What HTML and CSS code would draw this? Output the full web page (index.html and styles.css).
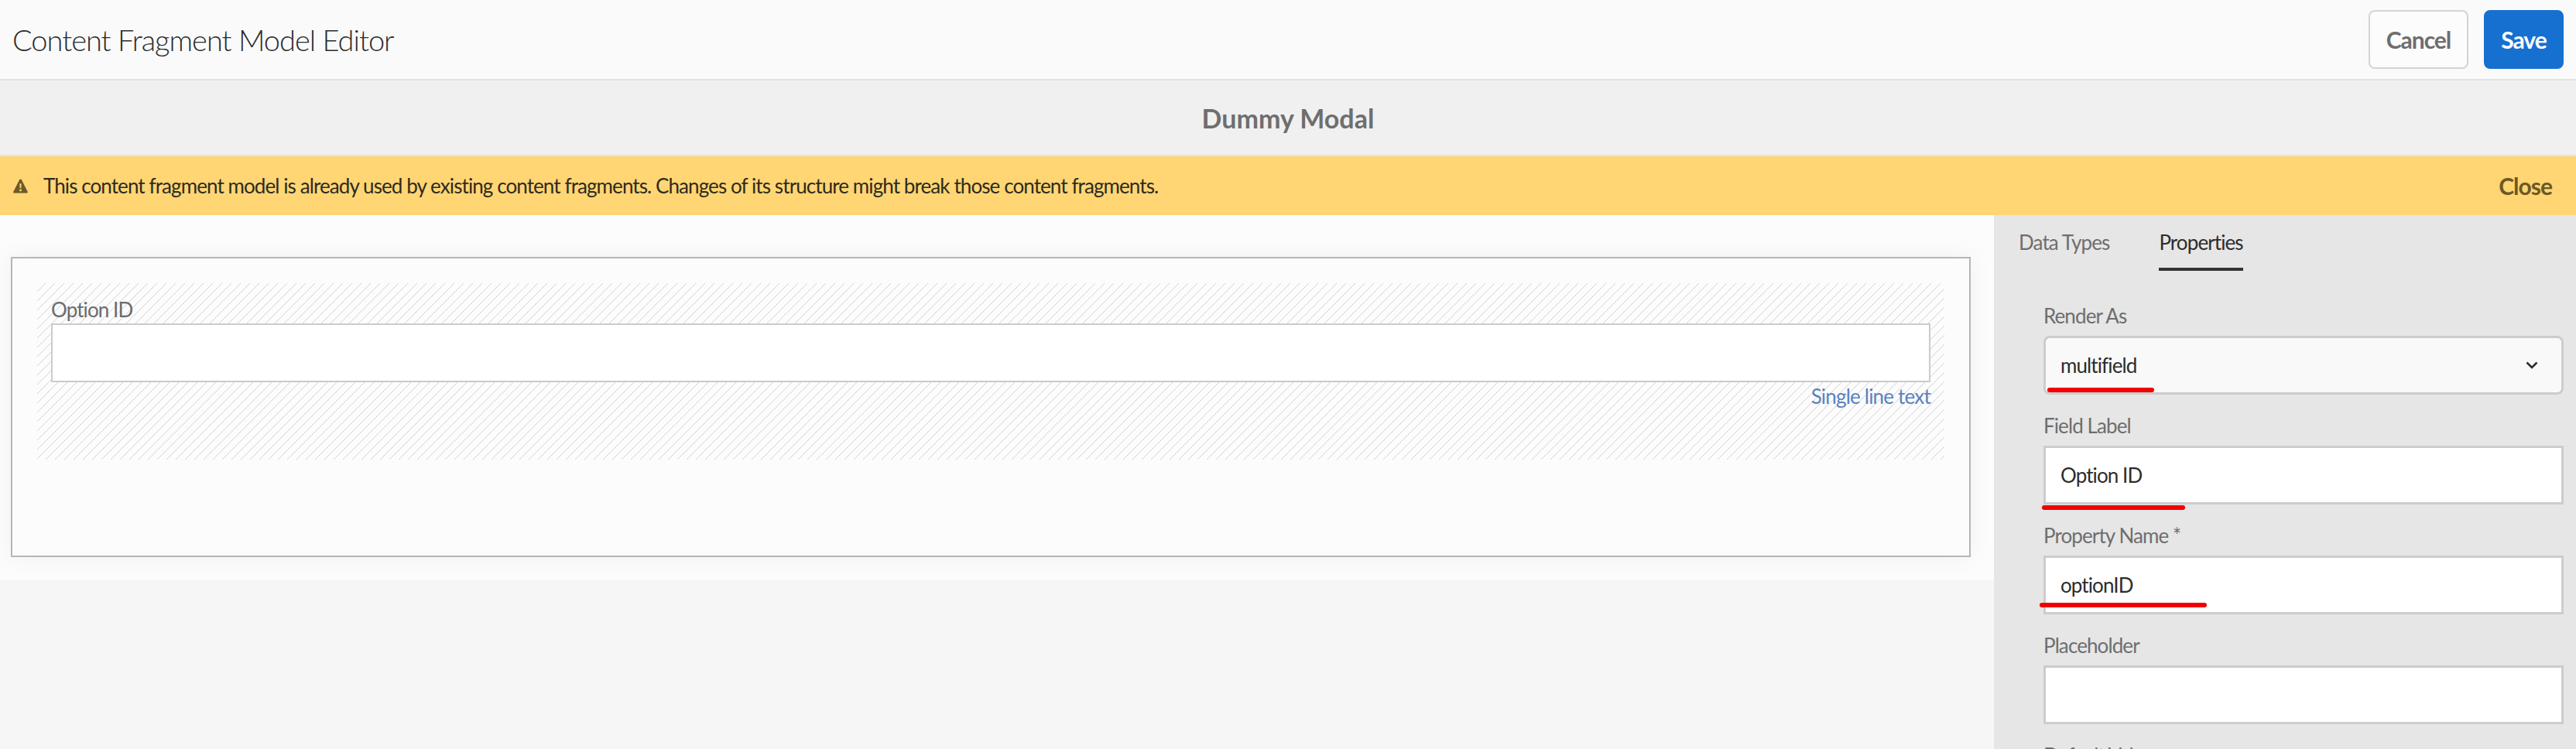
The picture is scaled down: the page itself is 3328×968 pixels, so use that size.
FILE: index.html
```html
<!DOCTYPE html>
<html lang="en">
<head>
<meta charset="utf-8">
<title>Content Fragment Model Editor</title>
<link rel="stylesheet" href="styles.css">
</head>
<body>
<header class="topbar">
  <h1 class="topbar-title">Content Fragment Model Editor</h1>
  <div class="actions">
    <button class="btn btn-cancel">Cancel</button>
    <button class="btn btn-save">Save</button>
  </div>
</header>
<div class="modelbar">Dummy Modal</div>
<div class="alert">
  <svg class="alert-icon" viewBox="0 0 20 20" aria-hidden="true"><path fill-rule="evenodd" d="M10 0.5c.6 0 1.1.3 1.4.9l8.3 16.2c.5 1-.2 2-1.3 2H1.600c-1.100 0-1.800-1-1.300-2L8.600 1.400C8.900.8 9.400.5 10 .5zM8.800 6.500l.3 6.500h1.800l.3-6.500zM10 14.300a1.500 1.500 0 1 0 0 3 1.500 1.500 0 0 0 0-3z"/></svg>
  <span class="alert-text">This content fragment model is already used by existing content fragments. Changes of its structure might break those content fragments.</span>
  <span class="alert-close">Close</span>
</div>
<main class="workspace">
  <section class="stage">
    <div class="canvas">
      <div class="card">
        <div class="dropzone">
          <div class="preview-label">Option ID</div>
          <div class="preview-input"></div>
          <div class="preview-type">Single line text</div>
        </div>
      </div>
    </div>
  </section>
  <aside class="panel">
    <nav class="tabs">
      <span class="tab">Data Types</span>
      <span class="tab tab-active">Properties</span>
    </nav>
    <div class="form">
      <div class="field">
        <label class="field-label">Render As</label>
        <div class="control control-select">
          <span>multifield</span>
          <svg class="chevron" viewBox="0 0 16 10" aria-hidden="true"><path d="M1.500 1.500L8 8l6.500-6.500" fill="none" stroke="#2c2c2c" stroke-width="2.600"/></svg>
          <i class="mark mark-select"></i>
        </div>
      </div>
      <div class="field">
        <label class="field-label">Field Label</label>
        <div class="control">Option ID<i class="mark mark-label"></i></div>
      </div>
      <div class="field">
        <label class="field-label">Property Name *</label>
        <div class="control">optionID<i class="mark mark-name"></i></div>
      </div>
      <div class="field">
        <label class="field-label">Placeholder</label>
        <div class="control"></div>
      </div>
      <div class="field">
        <label class="field-label">Default Value</label>
      </div>
    </div>
  </aside>
</main>
</body>
</html>
```
FILE: styles.css
```css
* { box-sizing: border-box; }
html, body { margin: 0; padding: 0; }
body {
  width: 3328px;
  height: 968px;
  overflow: hidden;
  background: #f6f6f6;
  font-family: Lato, "Open Sans", sans-serif;
  color: #2c2c2c;
}
.topbar {
  height: 104px;
  background: #fafafa;
  border-bottom: 2px solid #e1e1e1;
  display: flex;
  align-items: center;
  justify-content: space-between;
  padding: 0 16px 0 16px;
}
.topbar-title {
  margin: 0;
  font-size: 38px;
  font-weight: 300;
  letter-spacing: -1px;
  color: #2c2c2c;
}
.actions { display: flex; gap: 20px; }
.btn {
  height: 76px;
  border-radius: 8px;
  font-family: inherit;
  font-size: 30px;
  font-weight: 700;
  letter-spacing: -1px;
  padding: 0;
}
.btn-cancel {
  width: 129px;
  background: #fcfcfc;
  border: 2px solid #d4d4d4;
  color: #6e6e6e;
}
.btn-save {
  width: 103px;
  background: #1570d0;
  border: 2px solid #1570d0;
  color: #fff;
}
.modelbar {
  height: 98px;
  background: #f0f0f0;
  border-bottom: 2px solid #e5e5e5;
  display: flex;
  align-items: center;
  justify-content: center;
  font-size: 34px;
  font-weight: 700;
  color: #6e6e6e;
}
.alert {
  height: 76px;
  background: #ffd673;
  display: flex;
  align-items: center;
  padding: 0 31px 0 17px;
  font-size: 26px;
}
.alert-icon { width: 19px; height: 19px; fill: #6d5a2a; flex: none; }
.alert-text { margin-left: 20px; flex: 1; color: #2e2a1e; letter-spacing: -0.91px; }
.alert-close { font-size: 30px; font-weight: 700; letter-spacing: -1px; color: #6d5826; }
.workspace { display: flex; height: 690px; }
.stage { width: 2576px; flex: none; }
.canvas {
  height: 472px;
  background: #fcfcfc;
  padding: 54px 30px 0 14px;
}
.card {
  height: 388px;
  border: 2px solid #b6b6b6;
  background: #fcfcfc;
  box-shadow: 0 0 30px rgba(0, 0, 0, .05);
  padding: 32px;
}
.dropzone {
  height: 228px;
  padding: 16px 18px 0;
  background: repeating-linear-gradient(135deg, transparent 0, transparent 7.500px, #d2d2d2 7.500px, #d2d2d2 8.485px);
}
.preview-label { font-size: 26px; letter-spacing: -0.9px; line-height: 36px; color: #6b6b6b; }
.preview-input { height: 76px; background: #fff; border: 2px solid #cbcbcb; }
.preview-type { font-size: 26px; letter-spacing: -0.8px; line-height: 36px; color: #5a82c0; text-align: right; }
.panel {
  flex: 1;
  background: #e6e6e6;
  padding: 0 16px 0 32px;
  overflow: hidden;
}
.tabs { display: flex; gap: 64px; height: 72px; font-size: 26px; letter-spacing: -0.9px; }
.tab { line-height: 70px; color: #6e6e6e; }
.tab-active { color: #2c2c2c; border-bottom: 4px solid #333; }
.form { margin: 18px 0 0 32px; }
.field { height: 142px; }
.field-label {
  display: flex;
  align-items: flex-end;
  height: 66px;
  padding-bottom: 8px;
  font-size: 26px;
  letter-spacing: -0.9px;
  line-height: 36px;
  color: #6e6e6e;
}
.control {
  position: relative;
  height: 76px;
  background: #fff;
  border: 3px solid #ccc;
  padding: 0 19px;
  display: flex;
  align-items: center;
  justify-content: space-between;
  font-size: 26px;
  letter-spacing: -0.9px;
  color: #2c2c2c;
}
.control-select { background: #f9f9f9; border-radius: 8px; }
.chevron { width: 16px; height: 10px; margin-right: 11px; }
.mark {
  position: absolute;
  height: 6px;
  border-radius: 3px;
  background: #f00000;
}
.mark-select { left: 2px; bottom: 0; width: 138px; }
.mark-label { left: -5px; bottom: -10px; width: 185px; }
.mark-name { left: -8px; bottom: 6px; width: 216px; }
```
